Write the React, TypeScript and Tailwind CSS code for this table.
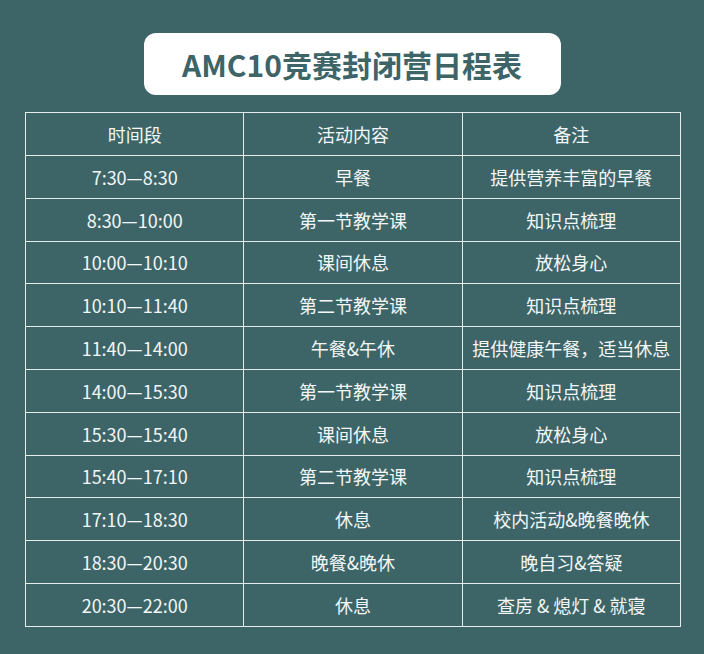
const rows: [string, string, string][] = [
  ['7:30—8:30', '早餐', '提供营养丰富的早餐'],
  ['8:30—10:00', '第一节教学课', '知识点梳理'],
  ['10:00—10:10', '课间休息', '放松身心'],
  ['10:10—11:40', '第二节教学课', '知识点梳理'],
  ['11:40—14:00', '午餐&午休', '提供健康午餐，适当休息'],
  ['14:00—15:30', '第一节教学课', '知识点梳理'],
  ['15:30—15:40', '课间休息', '放松身心'],
  ['15:40—17:10', '第二节教学课', '知识点梳理'],
  ['17:10—18:30', '休息', '校内活动&晚餐晚休'],
  ['18:30—20:30', '晚餐&晚休', '晚自习&答疑'],
  ['20:30—22:00', '休息', '查房 & 熄灯 & 就寝'],
];

const font = { fontFamily: '"Noto Sans CJK SC", "Noto Sans", sans-serif' };

export default function App() {
  return (
    <div className="w-[704px] h-[654px] bg-[#3d6568] overflow-hidden" style={font}>
      <div className="flex justify-center pt-[33px]">
        <div className="w-[417px] h-[62px] bg-white rounded-[12px] flex items-center justify-center">
          <span className="text-[30px] font-bold text-[#3d6568] leading-none">
            AMC10竞赛封闭营日程表
          </span>
        </div>
      </div>

      <div className="pl-[25px] pt-[17px]">
        <table className="w-[656px] border-collapse table-fixed text-[18px] text-[#f3f7f7]">
          <thead>
            <tr className="h-[43px]">
              {['时间段', '活动内容', '备注'].map((h) => (
                <th key={h} className="border border-[#e4ecec] font-normal text-center p-0">
                  {h}
                </th>
              ))}
            </tr>
          </thead>
          <tbody>
            {rows.map((r, i) => (
              <tr key={i} className="h-[42.8px]">
                {r.map((c, j) => (
                  <td key={j} className="border border-[#e4ecec] text-center p-0 leading-none">
                    {c}
                  </td>
                ))}
              </tr>
            ))}
          </tbody>
        </table>
      </div>
    </div>
  );
}
